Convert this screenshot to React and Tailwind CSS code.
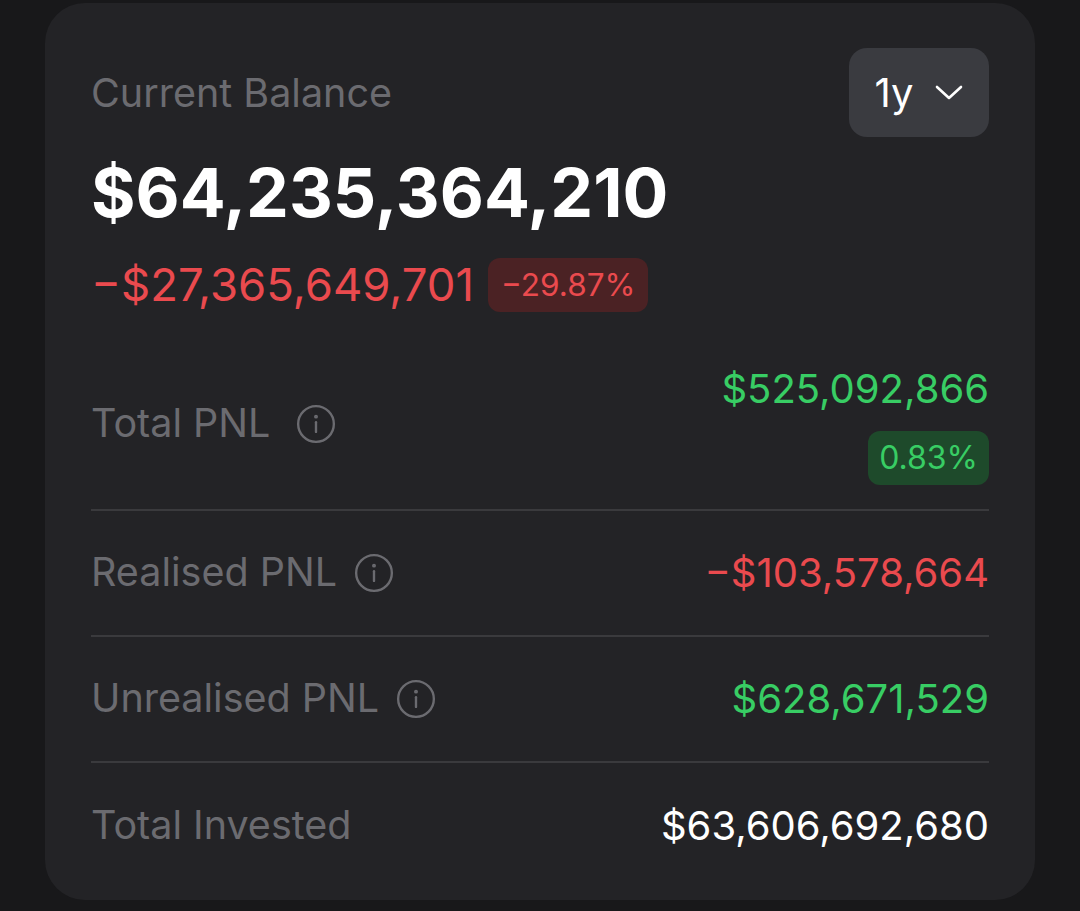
function Info() {
  return (
    <svg width="42" height="42" viewBox="0 0 24 24" fill="none" stroke="currentColor" strokeWidth="1.35" strokeLinecap="round">
      <circle cx="12" cy="12" r="10.2" />
      <path d="M12 11v5.5" />
      <circle cx="12" cy="7.8" r="0.45" fill="currentColor" />
    </svg>
  );
}

function Chevron() {
  return (
    <svg width="28" height="16" viewBox="0 0 28 16" fill="none" stroke="currentColor" strokeWidth="2.6" strokeLinecap="round" strokeLinejoin="round">
      <polyline points="2,2 14,13 26,2" />
    </svg>
  );
}

function Row({ label, gap = 'gap-[16px]', border = true, children }) {
  return (
    <div className={`flex h-[126px] items-center justify-between ${border ? 'border-b-2 border-[#3a3a3d]' : ''}`}>
      <div className={`flex items-center ${gap} text-[39.5px] text-[#6b6b70]`}>
        <span>{label}</span>
        <Info />
      </div>
      {children}
    </div>
  );
}

export default function App() {
  return (
    <div className="min-h-[911px] bg-[#18181a] px-[45px] pt-[3px] font-['Inter',sans-serif]">
      <div className="rounded-[40px] bg-[#232326] px-[46px] pt-[45px] pb-[11px]">
        <div className="flex justify-between">
          <div>
            <div className="pt-[21px] text-[39.5px] leading-[48px] text-[#6b6b70]">Current Balance</div>
            <div className="mt-[37px] text-[68px] font-bold leading-[76px] text-white">$64,235,364,210</div>
            <div className="mt-[28px] flex items-center gap-[14px]">
              <span className="text-[45.5px] leading-[54px] text-[#ea4a4e]">−$27,365,649,701</span>
              <span className="rounded-[12px] bg-[#4b2224] px-[13px] text-[31.5px] leading-[54px] text-[#ea4a4e]">−29.87%</span>
            </div>
          </div>
          <button className="flex h-[89px] w-[140px] items-center justify-center gap-[22px] self-start rounded-[18px] bg-[#3a3b40] text-[40px] text-white">
            <span>1y</span>
            <Chevron />
          </button>
        </div>

        <div className="mt-[51px]">
          <div className="flex items-center justify-between border-b-2 border-[#3a3a3d] pb-[24px]">
            <div className="flex items-center gap-[25px] text-[39.5px] text-[#6b6b70]">
              <span>Total PNL</span>
              <Info />
            </div>
            <div className="flex flex-col items-end">
              <span className="text-[40px] leading-[52px] text-[#38cd64]">$525,092,866</span>
              <span className="mt-[16px] rounded-[12px] bg-[#1e4a2b] px-[11px] text-[32px] leading-[54px] text-[#38cd64]">0.83%</span>
            </div>
          </div>
          <Row label="Realised PNL">
            <span className="text-[40px] text-[#ea4a4e]">−$103,578,664</span>
          </Row>
          <Row label="Unrealised PNL">
            <span className="text-[40px] text-[#38cd64]">$628,671,529</span>
          </Row>
          <div className="flex h-[126px] items-center justify-between">
            <span className="text-[39.5px] text-[#6b6b70]">Total Invested</span>
            <span className="text-[40px] text-white">$63,606,692,680</span>
          </div>
        </div>
      </div>
    </div>
  );
}
